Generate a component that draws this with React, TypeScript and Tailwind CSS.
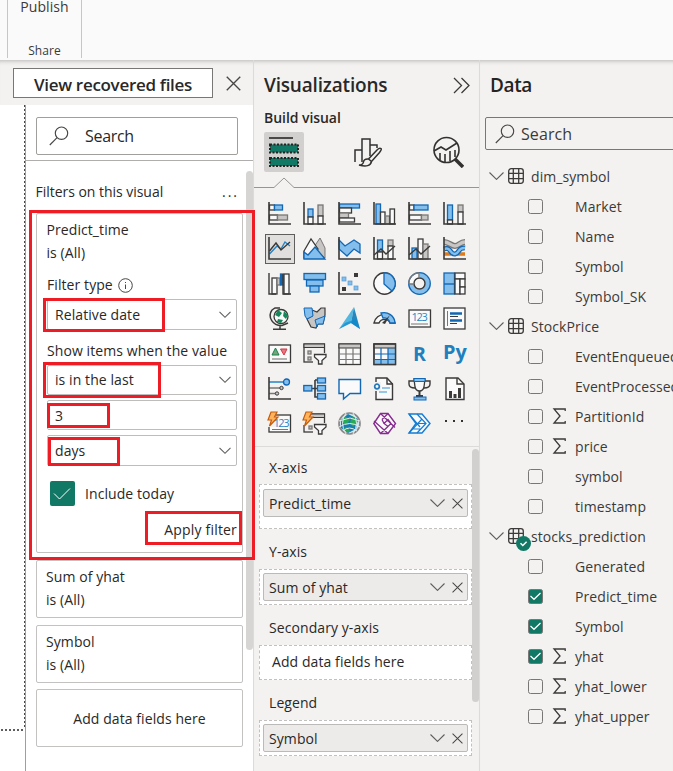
import React from "react";
import type { ReactNode } from "react";

const D = "#3b3a39";
const B = "#1267b4";
const L = "#83beec";
const G = "#c8c6c4";
const S = "#797775";
const W = "#fafafa";

function Box({ x, y, w, h, f = W, s = D }: { x: number; y: number; w: number; h: number; f?: string; s?: string }) {
  return <rect x={x} y={y} width={w} height={h} fill={f} stroke={s} strokeWidth="1.3" />;
}

function Line({ d, s = D, f = "none", w = 1.4 }: { d: string; s?: string; f?: string; w?: number }) {
  return <path d={d} stroke={s} fill={f} strokeWidth={w} />;
}

const Axes = () => <Line d="M1 0V22H23" w={1.6} />;

const Bolt = () => <path d="M3 0H9L6.5 5H10L1.5 14L3.5 8H0Z" fill="#ffb45c" stroke="#c75b0a" strokeWidth="1.2" />;

const Funnel = () => <path d="M11.5 12.5H23V15L19 18.5V22H15.5V18.5L11.5 15Z" fill={W} stroke={D} strokeWidth="1.3" />;

const visuals: ReactNode[] = [
  <><Box x={1.5} y={3} w={5} h={5} /><Box x={6.5} y={3} w={8} h={5} f={L} s={B} /><Box x={1.5} y={13} w={8} h={5} /><Box x={9.5} y={13} w={10} h={5} f={G} s={S} /><Axes /></>,
  <><Box x={5} y={7} w={5} h={8} f={L} s={B} /><Box x={5} y={15} w={5} h={7} /><Box x={15} y={3} w={5} h={11} f={G} s={S} /><Box x={15} y={14} w={5} h={8} /><Axes /></>,
  <><Box x={1.5} y={2} w={20} h={4} f={L} s={B} /><Box x={1.5} y={6} w={12} h={5} /><Box x={1.5} y={11} w={9} h={5} f={G} s={S} /><Box x={1.5} y={16} w={15} h={4} /><Axes /></>,
  <><Box x={3} y={2} w={4.5} h={20} f={L} s={B} /><Box x={7.5} y={10} w={4.5} h={12} /><Box x={12.5} y={14} w={4} h={8} f={G} s={S} /><Box x={17} y={7} w={4.5} h={15} /><Axes /></>,
  <><Box x={1.5} y={3} w={4.5} h={5} /><Box x={6} y={3} w={14} h={5} f={L} s={B} /><Box x={1.5} y={13} w={12} h={5} /><Box x={13.5} y={13} w={6.5} h={5} f={G} s={S} /><Axes /></>,
  <><Box x={4.5} y={3} w={5} h={15} f={L} s={B} /><Box x={4.5} y={18} w={5} h={4} /><Box x={15} y={3} w={5} h={7} f={G} s={S} /><Box x={15} y={10} w={5} h={12} /><Axes /></>,
  <><Line d="M1.5 17L9 9L13 12L17 5L22 9" s="#2484c6" /><Line d="M1.5 14L8 6L13 13L22 5" /><Axes /></>,
  <><path d="M11 10L17 1L22 11V21Z" fill={G} stroke={S} /><path d="M1 14L8 2L15 12L10 21H1Z" fill={W} stroke={D} strokeWidth="1.3" /><path d="M1 22V15L5 18L12 10L22 22Z" fill={L} stroke={B} strokeWidth="1.3" /></>,
  <><path d="M1 3L7 9L16 3L22 7V16L16 12L9 19L1 12Z" fill={L} stroke={B} strokeWidth="1.3" /><Axes /></>,
  <><Box x={4.5} y={3} w={5} h={12} f={L} s={B} /><Box x={4.5} y={15} w={5} h={7} /><Box x={15} y={3} w={5} h={6} f={G} s={S} /><Box x={15} y={9} w={5} h={13} /><Line d="M1 18L8 12L13 17L22 9" /><Axes /></>,
  <><Box x={4} y={11} w={5} h={11} f={L} s={B} /><Box x={10} y={2} w={5} h={20} /><Box x={15} y={7} w={5} h={15} f={G} s={S} /><Line d="M1 18L8 12L13 17L22 9" /><Axes /></>,
  <><path d="M1 11H7M17 11H22M1 17H8M14 17H22" stroke="#e07b17" strokeWidth="3.5" fill="none" /><path d="M1 5C6 5 8 9 12 9C16 9 17 5 22 5" stroke={S} strokeWidth="6" fill="none" /><path d="M1 5C6 5 8 9 12 9C16 9 17 5 22 5" stroke={G} strokeWidth="3.4" fill="none" /><path d="M1 12C8 9 7 18 12 17C17 16 15 10 22 11" stroke={B} strokeWidth="5" fill="none" /><path d="M1 12C8 9 7 18 12 17C17 16 15 10 22 11" stroke={L} strokeWidth="2.5" fill="none" /><Axes /></>,
  <><Box x={4} y={6} w={5} h={16} /><Box x={9} y={6} w={3} h={7} f={G} s={S} /><Box x={12.5} y={2} w={2.5} h={11} f={B} s={B} /><Box x={16} y={2} w={5} h={20} /><Line d="M1 1V22H8M15 2V22H23" /></>,
  <><Box x={1} y={1.5} w={21.5} h={6} f={L} s={B} /><Box x={3.5} y={8} w={16.5} h={6} f={L} s={B} /><Box x={7} y={14} w={9} h={6} f={L} s={B} /></>,
  <><rect x="4" y="5" width="4" height="4" fill={L} stroke="#5799ce" strokeWidth=".7" /><rect x="10" y="9" width="4" height="4" fill={L} stroke="#5799ce" strokeWidth=".7" /><rect x="16" y="14" width="4" height="4" fill={L} stroke="#5799ce" strokeWidth=".7" /><path d="M16 1H20V5H16ZM4 15H8V19H4Z" fill={D} /><Axes /></>,
  <><circle cx="11.5" cy="11.5" r="10.7" fill={W} stroke={D} strokeWidth="1.4" /><path d="M11 .8A10.7 10.7 0 0 1 19 19L11 12Z" fill={L} stroke={B} strokeWidth="1.3" /></>,
  <><circle cx="11.5" cy="11.5" r="8.2" fill="none" stroke={W} strokeWidth="5" /><path d="M11.5 3.3A8.2 8.2 0 1 1 3.3 12" fill="none" stroke={L} strokeWidth="5" /><circle cx="11.5" cy="11.5" r="10.8" fill="none" stroke={B} strokeWidth="1.3" /><circle cx="11.5" cy="11.5" r="5.5" fill="none" stroke={D} strokeWidth="1.4" /><Line d="M.8 12A10.8 10.8 0 0 1 11.5 .7M1 12H6M11 1V6" s={S} /></>,
  <><Box x={1} y={1} w={10.5} h={21} f={L} s={B} /><Line d="M1 12H11.5" s={B} /><Box x={12} y={1} w={10} h={6} /><Box x={12} y={7} w={5} h={15} /><Box x={17} y={7} w={5} h={8} /><Box x={17} y={15} w={5} h={7} /></>,
  <><circle cx="13" cy="9.5" r="7" fill={W} stroke={D} strokeWidth="1.3" /><path d="M10 3L14 6L11 10L7 8ZM16 4L20 8L18 12L15 9ZM10 12L15 13L13 16L9 15Z" fill="#15875a" /><Line d="M4 3C-1 10 5 19 14 18.5L20 16M12 18V22M5 22.2H18M4 3L7 1H12" w={1.5} /></>,
  <><path d="M9 3L14 5L18 1H22V8L20 17L15 17L13 21L8 20L4 12L9 9Z" fill={G} stroke={D} strokeWidth="1.2" /><path d="M1 1H9L10 9L4 12L2 9Z" fill={L} stroke={B} /><path d="M12 13L22 9L20 17L15 17L14 20Z" fill={L} stroke={B} /></>,
  <><path d="M16 0L1 22L13 16Z" fill="#54b7df" /><path d="M16 0L22 22L13 16Z" fill="#2589c0" /><path d="M1 22L13 16L22 22L18 12L7 16Z" fill="#0788d0" opacity=".65" /></>,
  <><path d="M1 16A10.7 10.7 0 0 1 22 16H17A6 6 0 0 0 6 16Z" fill={W} stroke={D} strokeWidth="1.4" /><path d="M8 6A11 11 0 0 1 22 16H17A6 6 0 0 0 10 11Z" fill={L} stroke={B} strokeWidth="1.3" /><path d="M17 8L12 17L9 16Z" fill={D} /></>,
  <><Box x={1} y={3} w={21.5} h={17} /><text x="3.4" y="14.2" fontSize="11" fill="#2389c9" textLength="16.5" className="font-['Open_Sans',sans-serif]">123</text><Line d="M3 17H20" s={S} w={1} /></>,
  <><Box x={1} y={1} w={21} h={21} /><Line d="M4.5 4V19" s={S} w={1} /><Line d="M7 6.5H19M7 13.5H19" s={B} w={2.5} /><Line d="M7 9.5H15M7 16.5H14" s={D} w={1.2} /></>,
  <><Box x={1} y={3} w={21.5} h={17.5} /><path d="M4 13L7.5 6L11 13Z" fill="#77a57b" stroke="#16834b" /><path d="M12.5 7H19L16 13Z" fill="#e97782" stroke="#cf3948" /><Line d="M4 17H19" s={S} w={1.1} /></>,
  <><Box x={1} y={2} w={20.5} h={18} f="#f2f1f0" /><rect x="1" y="2" width="20.5" height="3.5" fill={G} stroke={D} /><Box x={5} y={9} w={3} h={3} f={G} s={S} /><Box x={5} y={15} w={3} h={3} f={G} s={S} /><rect x="10" y="11" width="13" height="12" fill="#f2f1f0" /><Funnel /></>,
  <><Box x={1} y={2} w={21.5} h={20.5} /><rect x="1" y="2" width="21.5" height="4" fill={G} stroke={D} /><Line d="M2 12H22M2 17.5H22M8 6V22M15 6V22" s={S} w={1.2} /></>,
  <><Box x={1} y={2} w={21.5} h={20.5} /><path d="M15 6H22V22H1V17H15Z" fill={L} /><rect x="1" y="2" width="21.5" height="4" fill={G} stroke={D} /><Line d="M2 12H22M2 17.5H22M8 6V22M15 6V22" s={B} w={1.2} /><Line d="M1 2H22.5V22.5H1Z" /></>,
  <text x="5" y="18.5" fontSize="20" fontWeight="700" fill="#217fbd" textLength="13" lengthAdjust="spacingAndGlyphs" className="font-['Open_Sans',sans-serif]">R</text>,
  <text x="0" y="17" fontSize="20" fontWeight="700" fill="#217fbd" textLength="24" lengthAdjust="spacingAndGlyphs" className="font-['Open_Sans',sans-serif]">Py</text>,
  <><Line d="M1 5H17" s="#2484c6" w={1.5} /><circle cx="18.5" cy="5" r="3" fill={L} stroke={B} strokeWidth="1.3" /><Line d="M1 11H12M1 16.5H8" s={S} /><circle cx="13.5" cy="11" r="1.7" fill={G} stroke={D} /><circle cx="9" cy="16.5" r="1.7" fill={G} stroke={D} /><Axes /></>,
  <><Line d="M8 11.5H12M12 3V20H15M12 3H15M12 11.5H15" w={1.6} /><Box x={.8} y={8.5} w={8} h={5.5} f={L} s={B} /><Box x={14.5} y={1} w={8} h={5} f={L} s={B} /><Box x={14.5} y={8.5} w={8} h={5.5} f={L} s={B} /><Box x={14.5} y={16.5} w={8} h={5.5} f={L} s={B} /></>,
  <Line d="M1 2.5H22.5V16.5H12L5.5 22V16.5H1Z" s={B} f={W} />,
  <><path d="M3 1H14L19.5 7V22.5H3Z" fill={W} stroke={D} strokeWidth="1.4" /><Line d="M14 1V7H20" /><rect x="0" y="5" width="8" height="9" fill="#f2f1f0" /><circle cx="4" cy="9.5" r="2.3" fill={W} stroke="#2679b8" strokeWidth="1.7" /><Line d="M9 11H17M6 15H14" s="#3594d1" w={1.2} /></>,
  <><Line d="M6 4H1V7Q1 11 7 11M17 4H22V7Q22 11 16 11" /><path d="M6 2H17L16 10Q15 14 11.5 14Q8 14 7 10Z" fill={W} stroke={D} strokeWidth="1.3" /><rect x="6" y="1.5" width="11" height="3" fill={L} stroke={B} /><Line d="M11.5 14V19M8 19H15" w={2} /><rect x="6" y="20" width="12" height="3" fill={L} stroke={B} /></>,
  <><Line d="M3 1H15L21 7V22.5H3Z" f={W} /><Line d="M14 1V7H21" /><path d="M6 14H9V21H6ZM10.5 17H13.5V21H10.5ZM15 11H18V21H15Z" fill={D} /></>,
  <><Box x={1} y={3} w={21.5} h={17} /><rect x="0" y="0" width="8" height="15" fill="#f2f1f0" /><text x="5.5" y="14.5" fontSize="11" fill="#2389c9" textLength="16" className="font-['Open_Sans',sans-serif]">123</text><Line d="M4 17.5H20" s={S} w={1} /><Bolt /></>,
  <><Box x={1} y={2} w={20.5} h={18} f="#f2f1f0" /><rect x="1" y="2" width="20.5" height="3.5" fill={G} stroke={D} /><Box x={6} y={14} w={3} h={3} f={G} s={S} /><rect x="0" y="0" width="8" height="13" fill="#f2f1f0" /><rect x="10" y="11" width="13" height="12" fill="#f2f1f0" /><Bolt /><Funnel /></>,
  <><circle cx="11.5" cy="11.5" r="10.5" fill="#d0e8f2" stroke="#8a8886" strokeWidth="1.7" /><path d="M3 8L10 2L20 7L18 17L10 21L3 16Z" fill="#167db0" /><path d="M3 10L7 4L12 8L8 13ZM14 4L20 9L15 15L12 11ZM5 17L9 15L13 20H9Z" fill="#29a857" /><Line d="M1 9L12 6L22 9M1 15Q12 8 22 15M5 19Q11 13 19 19M8 1Q1 11 8 22M15 1Q22 11 15 22" s="#e4ecec" w={1} /></>,
  <><Line d="M7.5 1.5H15L22.5 11.5L15 21.5H7.5L.8 11.5Z" s="#862b90" f={W} /><Line d="M7.5 1.5L22 15.5M15 1.5L9 7.5M1 9L15 21.5M15 14.5L7.5 21.5M11 11.5L15 7.5L18 11.5L15 14.5ZM9 7.5L11 11.5" s="#862b90" w={1.3} /></>,
  <><Line d="M1 2H14L22 11.5L14 21H1L8 11.5Z" s="#137cd4" f={W} /><Line d="M1 2L12 15M9 2L18 11.5L9 21M8 11.5H18M1 21L14 7M4 17H13" s="#137cd4" w={1.2} /></>,
  <path d="M2 8H4V10H2ZM10 8H12V10H10ZM18 8H20V10H18Z" fill="#323130" />,
];

function Chevron({ wide = false }: { wide?: boolean }) {
  return (
    <svg className="shrink-0" width={wide ? 15 : 12} height="8" viewBox={wide ? "0 0 15 8" : "0 0 12 8"} fill="none" stroke="#605e5c" strokeWidth="1.1">
      <path d={wide ? "M.5 .5L7.5 7.4L14.5 .5" : "M.5 .8L6 6.3L11.5 .8"} />
    </svg>
  );
}

function Close({ size = 11 }: { size?: number }) {
  return <svg className="shrink-0" width={size} height={size} viewBox="0 0 12 12" fill="none" stroke="#484644" strokeWidth="1.1"><path d="M.6 .6L11.4 11.4M11.4 .6L.6 11.4" /></svg>;
}

function Magnifier() {
  return <svg className="shrink-0" width="20" height="20" viewBox="0 0 20 20" fill="none" stroke="#484644" strokeWidth="1.15"><circle cx="12.5" cy="7.2" r="6.2" /><path d="M8.1 11.7L.8 19" /></svg>;
}

function Select({ text, className = "" }: { text: string; className?: string }) {
  return (
    <div className={"flex w-[190px] items-center justify-between rounded-[2px] border border-[#bebdbb] pr-[5px] pl-[7px] " + className}>
      <span>{text}</span><Chevron />
    </div>
  );
}

function FilterCard({ name, className }: { name: string; className: string }) {
  return (
    <div className={"h-[58px] w-[207px] rounded-[2px] border border-[#c3c2c0] pl-[9px] pt-[4px] leading-[23px] " + className}>
      <div>{name}</div><div>is (All)</div>
    </div>
  );
}

function Pill({ text }: { text: string }) {
  return (
    <div className="flex h-[28px] w-[205px] items-center rounded-[2px] border border-[#bcbab8] bg-[#edebe9] pr-[4px] pl-[5px]">
      <span className="flex-1 pt-px">{text}</span><Chevron wide /><span className="ml-[7px]"><Close size={11} /></span>
    </div>
  );
}

function Well({ className, children }: { className: string; children: ReactNode }) {
  return <div className={"ml-[5px] w-[213px] border border-dashed border-[#c3c1bf] bg-white " + className}>{children}</div>;
}

function Table({ name, active = false }: { name: string; active?: boolean }) {
  return (
    <div className="flex h-[30px] items-center pl-[9px]">
      <Chevron wide />
      <span className="relative ml-[4px]">
        <svg width="16" height="16" viewBox="0 0 16 16" fill="none" stroke="#3b3a39" strokeWidth="1.3"><rect x=".7" y=".7" width="14.6" height="14.6" rx="2.5" /><path d="M5.3 1V15M10.7 1V15M1 5.3H15M1 10.7H15" /></svg>
        {active && (
          <svg className="absolute top-[8px] left-[8px]" width="15" height="15" viewBox="0 0 15 15"><circle cx="7.5" cy="7.5" r="7.5" fill="#117865" /><path d="M4.5 7.3L6.8 9.5L10.6 5.8" fill="none" stroke="white" strokeWidth="1.5" /></svg>
        )}
      </span>
      <span className="ml-[7px] pt-[2px]">{name}</span>
    </div>
  );
}

function Field({ name, checked = false, sum = false }: { name: string; checked?: boolean; sum?: boolean }) {
  return (
    <div className="flex h-[30px] items-center pl-[48px]">
      <svg className="shrink-0" width="15" height="15" viewBox="0 0 15 15" fill="none">
        <rect x=".5" y=".5" width="14" height="14" rx="2" fill={checked ? "#117865" : "none"} stroke="#797775" />
        {checked && <path d="M2.5 7L6 10.3L12.5 4" stroke="white" strokeWidth="1.2" />}
      </svg>
      <span className="ml-[9px] w-[23px] shrink-0">
        {sum && <svg width="15" height="16" viewBox="0 0 15 16" fill="none" stroke="#3b3a39" strokeWidth="1.3"><path d="M13.2 3V1H2L8 8L2 15H13.2V13" /></svg>}
      </span>
      <span className="pt-[2px]">{name}</span>
    </div>
  );
}

const frames = [
  "left-[29px] top-[210px] w-[226px] h-[350px]",
  "left-[43px] top-[298px] w-[122px] h-[34px]",
  "left-[43px] top-[362px] w-[118px] h-[36px]",
  "left-[47px] top-[403px] w-[63px] h-[25px]",
  "left-[48px] top-[437px] w-[72px] h-[29px]",
  "left-[145px] top-[511px] w-[97px] h-[34px]",
];

export default function App() {
  return (
    <div className="relative flex h-[771px] w-[673px] flex-col overflow-hidden bg-[#f3f2f1] font-['Open_Sans','Noto_Sans',sans-serif] text-[14px] leading-[20px] tracking-[0.08px] whitespace-nowrap text-[#292827]">
      <header className="h-[60px] shrink-0 bg-[#fafafa] pl-[7px]">
        <div className="flex h-[58px] w-[75px] flex-col items-center justify-between border-x border-[#c8c6c4] text-[#3b3a39]">
          <span className="leading-[14px]">Publish</span>
          <span className="text-[12px] leading-[14px]">Share</span>
        </div>
      </header>
      <div className="flex h-[711px]">
        <div className="flex w-[253px] shrink-0 flex-col shadow-[inset_0_5px_4px_-4px_#b8b6b4]">
          <div className="flex h-[45px] shrink-0 items-center pt-[1px] pl-[13px]">
            <div className="flex h-[30px] w-[200px] items-center justify-center border border-[#797775] bg-white pt-[3px] text-[17px] font-semibold tracking-[-0.3px]">View recovered files</div>
            <span className="ml-[13px]"><Close size={15} /></span>
          </div>
          <div className="flex flex-1 bg-white">
            <div className="flex h-[626px] w-[25px] flex-col">
              <div className="flex-1 self-end"><div className="h-full w-[1px] bg-[repeating-linear-gradient(180deg,#484644_0_2px,#fff_2px_4px)]" /></div>
              <div className="h-[2px] w-[25px] bg-[repeating-linear-gradient(90deg,#fff_0_1px,#605e5c_1px_3px,#fff_3px_4px)]" />
            </div>
            <section className="flex w-[228px] border-l border-[#a19f9d]">
              <div className="w-[220px]">
                <div className="h-[56px] w-[227px] border-b border-[#b0aeac] pt-[12px] pl-[10px]">
                  <div className="flex h-[38px] w-[202px] items-center rounded-[2px] border border-[#a19f9d] pl-[12px] text-[16px] tracking-[-0.3px]"><Magnifier /><span className="ml-[16px]">Search</span></div>
                </div>
                <div className="pl-[10px]">
                  <div className="flex h-[52px] w-[203px] items-center justify-between pt-[9px]"><span className="-ml-[0.5px] tracking-[-0.03px]">Filters on this visual</span><span className="tracking-[2px]">...</span></div>
                  <div className="h-[340px] w-[207px] rounded-[2px] border border-[#c3c2c0] pl-[10px]">
                    <div className="-ml-[0.5px] pt-[4px] leading-[23px]"><div>Predict_time</div><div>is (All)</div></div>
                    <div className="mt-[11px] flex items-center gap-[5px]">Filter type <svg width="15" height="15" viewBox="0 0 15 15" fill="none" stroke="#484644"><circle cx="7.5" cy="7.5" r="6.8" /><path d="M7.5 6.5V11M7.5 4V5" /></svg></div>
                    <Select text="Relative date" className="mt-[4px] h-[31px]" />
                    <div className="mt-[11px]">Show items when the value</div>
                    <Select text="is in the last" className="mt-[4px] h-[30px]" />
                    <div className="mt-[5px] h-[30px] w-[190px] rounded-[2px] border border-[#bebdbb] pt-[5px] pl-[7px]">3</div>
                    <Select text="days" className="mt-[5px] h-[31px]" />
                    <div className="mt-[15px] ml-[3px] flex items-center gap-[10px]"><svg width="25" height="25" viewBox="0 0 25 25"><rect width="25" height="25" rx="2" fill="#117865" /><path d="M4 12.5L9.5 18L20 7.5" fill="none" stroke="white" /></svg>Include today</div>
                    <div className="mt-[14px] w-[190px] text-right tracking-[0.18px]">Apply filter</div>
                  </div>
                  <FilterCard name="Sum of yhat" className="mt-[7px]" />
                  <FilterCard name="Symbol" className="mt-[7px]" />
                  <div className="mt-[6px] flex h-[58px] w-[207px] items-center justify-center rounded-[2px] border border-[#c3c2c0] pt-[1px]">Add data fields here</div>
                </div>
              </div>
              <div className="mt-[66px] h-[479px] w-[7px] rounded-full bg-[#d6d5d3]" />
            </section>
          </div>
        </div>
        <section className="w-[227px] shrink-0 border-x border-[#dddbd9] shadow-[inset_0_5px_4px_-4px_#b8b6b4]">
          <div className="flex h-[50px] items-center justify-between pr-[8px] pl-[10px] text-[19px] font-semibold tracking-[-0.18px]">Visualizations<svg width="18" height="17" viewBox="0 0 18 17" fill="none" stroke="#3b3a39" strokeWidth="1.3"><path d="M1 1L8.5 8.5L1 16M8.5 1L16 8.5L8.5 16" /></svg></div>
          <div className="h-[22px] pl-[10px] leading-[16px] font-semibold tracking-[-0.05px]">Build visual</div>
          <div className="flex h-[40px] items-center pl-[10px]">
            <div className="grid h-[40px] w-[40px] place-items-center rounded-[2px] bg-[#d2d0ce]">
              <svg width="30" height="32" viewBox="0 0 30 32"><path d="M0 2H24" stroke="#323130" strokeWidth="1.7" /><rect x="1" y="8.5" width="28" height="8" fill="#117865" stroke="#252423" strokeWidth="2" strokeDasharray="2 1.5" /><rect x="1" y="22" width="28" height="8" fill="#117865" stroke="#252423" strokeWidth="2" strokeDasharray="2 1.5" /></svg>
            </div>
            <svg className="ml-[50px]" width="28" height="30" viewBox="0 0 28 30" fill="none" stroke="#323130" strokeWidth="1.5"><path d="M1 25V13H8V25M8 13V2H16V19M16 8H23V11" /><path d="M27 11.5Q25.5 10.5 23.5 12.5L14.5 22L17.5 24.5L25.5 15.5Q28 12.5 27 11.5ZM14.5 22Q10 21.5 9.5 25Q9 28 5 28Q16 31 17.5 24.5Z" fill="#f3f2f1" /></svg>
            <svg className="ml-[51px]" width="31" height="32" viewBox="0 0 31 32" fill="none" stroke="#323130" strokeWidth="1.6"><circle cx="13.5" cy="14" r="12.5" /><path d="M1 15L8 11L13 14L24 7M7 17V24M12 18V26M17 15V25M22 14V21" /><path d="M22 23L30 31" strokeWidth="3.5" /></svg>
          </div>
          <svg className="mt-[5px] block" width="225" height="11" viewBox="0 0 225 11" fill="none" stroke="#979593"><path d="M0 10.5H20L30 1L40 10.5H225" /></svg>
          <div className="mt-[8px] ml-[8px] grid w-[210px] grid-cols-6">
            {visuals.map((icon, i) => (
              <div key={i} className="grid h-[35px] w-[35px] place-items-center">
                <div className={"grid h-[30px] w-[30px] place-items-center " + (i === 6 ? "border border-[#605e5c] bg-[#e1dfdd]" : "")}><svg className="overflow-visible" width="23" height="23" viewBox="0 0 23 23" fill="none">{icon}</svg></div>
              </div>
            ))}
          </div>
          <div className="mt-[5px] flex h-[325px] border-t border-[#dddbd9]">
            <div className="w-[218px]">
              <div className="mt-[11px] ml-[15px]">X-axis</div>
              <Well className="mt-[6px] h-[45px] pt-[4px] pl-[3px]"><Pill text="Predict_time" /></Well>
              <div className="mt-[13px] ml-[15px]">Y-axis</div>
              <Well className="mt-[7px] h-[36px] pt-[3px] pl-[3px]"><Pill text="Sum of yhat" /></Well>
              <div className="mt-[13px] ml-[15px]">Secondary y-axis</div>
              <Well className="mt-[7px] h-[35px] pt-[6px] pl-[12px]">Add data fields here</Well>
              <div className="mt-[13px] ml-[15px]">Legend</div>
              <Well className="mt-[7px] h-[36px] pt-[3px] pl-[3px]"><Pill text="Symbol" /></Well>
            </div>
            <div className="mt-[2px] h-[253px] w-[7px] rounded-full bg-[#d2d0ce]" />
          </div>
        </section>
        <section className="w-[193px] shrink-0 overflow-hidden text-[#3b3a39] shadow-[inset_0_5px_4px_-4px_#b8b6b4]">
          <div className="h-[57px] pt-[15px] pl-[10px] text-[19px] font-semibold tracking-[-0.4px] text-[#252423]">Data</div>
          <div className="ml-[5px] flex h-[33px] w-[200px] items-center rounded-[2px] border border-[#797775] pl-[9px] text-[16px]"><Magnifier /><span className="ml-[6px] pt-px">Search</span></div>
          <div className="mt-[11px]">
            <Table name="dim_symbol" />
            <Field name="Market" /><Field name="Name" /><Field name="Symbol" /><Field name="Symbol_SK" />
            <Table name="StockPrice" />
            <Field name="EventEnqueued" /><Field name="EventProcessed" /><Field name="PartitionId" sum /><Field name="price" sum /><Field name="symbol" /><Field name="timestamp" />
            <Table name="stocks_prediction" active />
            <Field name="Generated" /><Field name="Predict_time" checked /><Field name="Symbol" checked /><Field name="yhat" checked sum /><Field name="yhat_lower" sum /><Field name="yhat_upper" sum />
          </div>
        </section>
      </div>
      {frames.map((place) => <div key={place} className={"pointer-events-none absolute border-[3px] border-[#ee1c25] " + place} />)}
    </div>
  );
}
